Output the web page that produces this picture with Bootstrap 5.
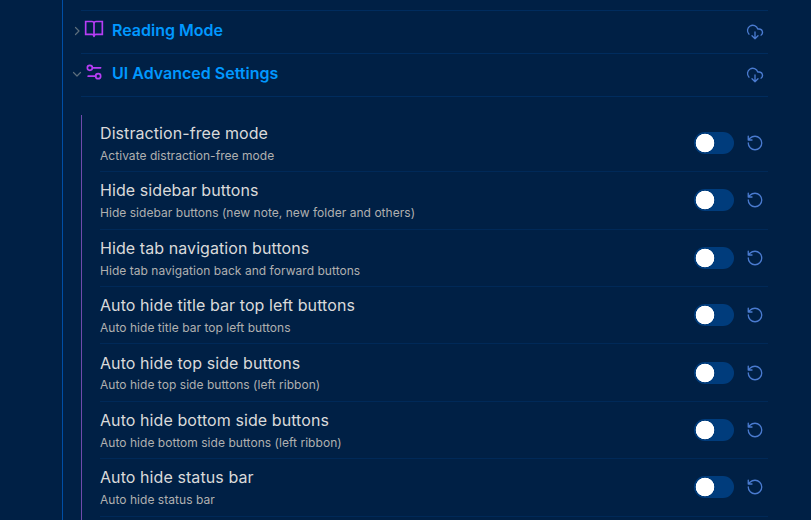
<!DOCTYPE html>
<html lang="en">
<head>
<meta charset="utf-8">
<meta name="viewport" content="width=device-width, initial-scale=1">
<title>UI Advanced Settings</title>
<link href="https://cdn.jsdelivr.net/npm/bootstrap@5.3.0/dist/css/bootstrap.min.css" rel="stylesheet">
<style>
  body { background: #002045; font-family: Inter, sans-serif; height: 520px; }
  svg { fill: none; stroke: currentColor; stroke-linecap: round; stroke-linejoin: round; flex: none; display: block; }
  .outer-group { margin-left: 62px; width: 706px; height: 520px; border-left: 1px solid #004ea5; padding: 10px 0 0 9px; }
  .heading-row { height: 43px; }
  .heading-main { border-top: 1px solid #002c5e; margin-left: 8px; padding-right: 4px; }
  .heading-last { border-bottom: 1px solid #002c5e; height: 44px; }
  .heading-row .chevron { color: #5c6e7c; margin: -1px -9px 0 0; width: 10px; z-index: 1; stroke-width: 1.2; }
  .heading-icon { color: #b73df5; margin: -5px 8px 0 3px; }
  .book-icon { margin-top: -6px; stroke-linejoin: miter; }
  .heading-title { font-size: 16px; line-height: 20px; font-weight: 600; color: #0098ff; margin-top: -4px; }
  .heading-last .heading-title { margin-top: -3px; }
  .cloud { color: #4a7bd0; }
  .settings-group { margin: 18.8px 0 0 9px; border-left: 1px solid #6f4aab; padding-left: 18px; height: 405.2px; }
  .setting-row { height: 57.4px; border-top: 1px solid #002958; padding-right: 4px; }
  .setting-row:first-child { border-top: 0; height: 56.4px; }
  .setting-text { padding-top: 1.8px; }
  .setting-name { font-size: 16px; line-height: 20.8px; color: #dadada; letter-spacing: .08px; }
  .setting-note { font-size: 12px; line-height: 18px; color: #b0b0b0; margin-top: 3px; letter-spacing: .04px; }
  .toggle.form-check-input { width: 40px; height: 22px; margin: 0; border: 0; border-radius: 11px; background: #003c7c radial-gradient(circle at 11px 11px, #fff 9px, transparent 9.6px) no-repeat; }
  .reset { color: #4a7bd0; border: 0; background: none; padding: 0; }
</style>
<script src="https://cdn.jsdelivr.net/npm/bootstrap@5.3.0/dist/js/bootstrap.bundle.min.js"></script>
</head>
<body class="overflow-hidden">
<svg width="0" height="0" class="position-absolute">
  <symbol id="cloud-down" viewBox="0 0 24 24"><path d="M4 14.9A7 7 0 1 1 15.71 8h1.79a4.5 4.5 0 0 1 2.5 8.24M12 12v9M8 17l4 4 4-4"/></symbol>
  <symbol id="rotate-back" viewBox="0 0 24 24"><path d="M3 12a9 9 0 1 0 9-9 9.75 9.75 0 0 0-6.74 2.74L3 8M3 3v5h5"/></symbol>
</svg>
<main class="outer-group overflow-hidden">
  <div class="heading-row d-flex align-items-center">
    <svg class="chevron" width="10" height="10" viewBox="0 0 10 10"><path d="M3.5 1.5 7 5 3.5 8.5"/></svg>
    <div class="heading-main d-flex align-items-center flex-grow-1 h-100">
      <svg class="heading-icon book-icon" width="20" height="20" viewBox="0 0 24 24" stroke-width="2"><path d="M12 5.5V21M2 3h7.5Q12 3 12 5.5 12 3 14.5 3H22v15.5h-7.5Q12 18.500 12 21q0-2.500-2.500-2.500H2z"/></svg>
      <div class="heading-title flex-grow-1">Reading Mode</div>
      <svg class="cloud" width="18" height="18" stroke-width="1.75"><use href="#cloud-down"/></svg>
    </div>
  </div>
  <div class="heading-row d-flex align-items-center">
    <svg class="chevron" width="10" height="10" viewBox="0 0 10 10"><path d="M1.5 3.5 5 7l3.5-3.5"/></svg>
    <div class="heading-main heading-last d-flex align-items-center flex-grow-1">
      <svg class="heading-icon" width="20" height="20" viewBox="0 0 24 24" stroke-width="2"><path d="M20 7h-9M14 17H5"/><circle cx="17" cy="17" r="3"/><circle cx="7" cy="7" r="3"/></svg>
      <div class="heading-title flex-grow-1">UI Advanced Settings</div>
      <svg class="cloud" width="18" height="18" stroke-width="1.75"><use href="#cloud-down"/></svg>
    </div>
  </div>
  <section class="settings-group">
    <div class="setting-row d-flex align-items-center">
      <div class="setting-text flex-grow-1"><div class="setting-name">Distraction-free mode</div><div class="setting-note">Activate distraction-free mode</div></div>
      <input class="toggle form-check-input" type="checkbox" role="switch" aria-label="Distraction-free mode">
      <button class="reset ms-2 ps-1" aria-label="Restore"><svg width="18" height="18" stroke-width="1.75"><use href="#rotate-back"/></svg></button>
    </div>
    <div class="setting-row d-flex align-items-center">
      <div class="setting-text flex-grow-1"><div class="setting-name">Hide sidebar buttons</div><div class="setting-note">Hide sidebar buttons (new note, new folder and others)</div></div>
      <input class="toggle form-check-input" type="checkbox" role="switch" aria-label="Hide sidebar buttons">
      <button class="reset ms-2 ps-1" aria-label="Restore"><svg width="18" height="18" stroke-width="1.75"><use href="#rotate-back"/></svg></button>
    </div>
    <div class="setting-row d-flex align-items-center">
      <div class="setting-text flex-grow-1"><div class="setting-name">Hide tab navigation buttons</div><div class="setting-note">Hide tab navigation back and forward buttons</div></div>
      <input class="toggle form-check-input" type="checkbox" role="switch" aria-label="Hide tab navigation buttons">
      <button class="reset ms-2 ps-1" aria-label="Restore"><svg width="18" height="18" stroke-width="1.75"><use href="#rotate-back"/></svg></button>
    </div>
    <div class="setting-row d-flex align-items-center">
      <div class="setting-text flex-grow-1"><div class="setting-name">Auto hide title bar top left buttons</div><div class="setting-note">Auto hide title bar top left buttons</div></div>
      <input class="toggle form-check-input" type="checkbox" role="switch" aria-label="Auto hide title bar top left buttons">
      <button class="reset ms-2 ps-1" aria-label="Restore"><svg width="18" height="18" stroke-width="1.75"><use href="#rotate-back"/></svg></button>
    </div>
    <div class="setting-row d-flex align-items-center">
      <div class="setting-text flex-grow-1"><div class="setting-name">Auto hide top side buttons</div><div class="setting-note">Auto hide top side buttons (left ribbon)</div></div>
      <input class="toggle form-check-input" type="checkbox" role="switch" aria-label="Auto hide top side buttons">
      <button class="reset ms-2 ps-1" aria-label="Restore"><svg width="18" height="18" stroke-width="1.75"><use href="#rotate-back"/></svg></button>
    </div>
    <div class="setting-row d-flex align-items-center">
      <div class="setting-text flex-grow-1"><div class="setting-name">Auto hide bottom side buttons</div><div class="setting-note">Auto hide bottom side buttons (left ribbon)</div></div>
      <input class="toggle form-check-input" type="checkbox" role="switch" aria-label="Auto hide bottom side buttons">
      <button class="reset ms-2 ps-1" aria-label="Restore"><svg width="18" height="18" stroke-width="1.75"><use href="#rotate-back"/></svg></button>
    </div>
    <div class="setting-row d-flex align-items-center">
      <div class="setting-text flex-grow-1"><div class="setting-name">Auto hide status bar</div><div class="setting-note">Auto hide status bar</div></div>
      <input class="toggle form-check-input" type="checkbox" role="switch" aria-label="Auto hide status bar">
      <button class="reset ms-2 ps-1" aria-label="Restore"><svg width="18" height="18" stroke-width="1.75"><use href="#rotate-back"/></svg></button>
    </div>
    <div class="setting-row"></div>
  </section>
</main>
</body>
</html>
